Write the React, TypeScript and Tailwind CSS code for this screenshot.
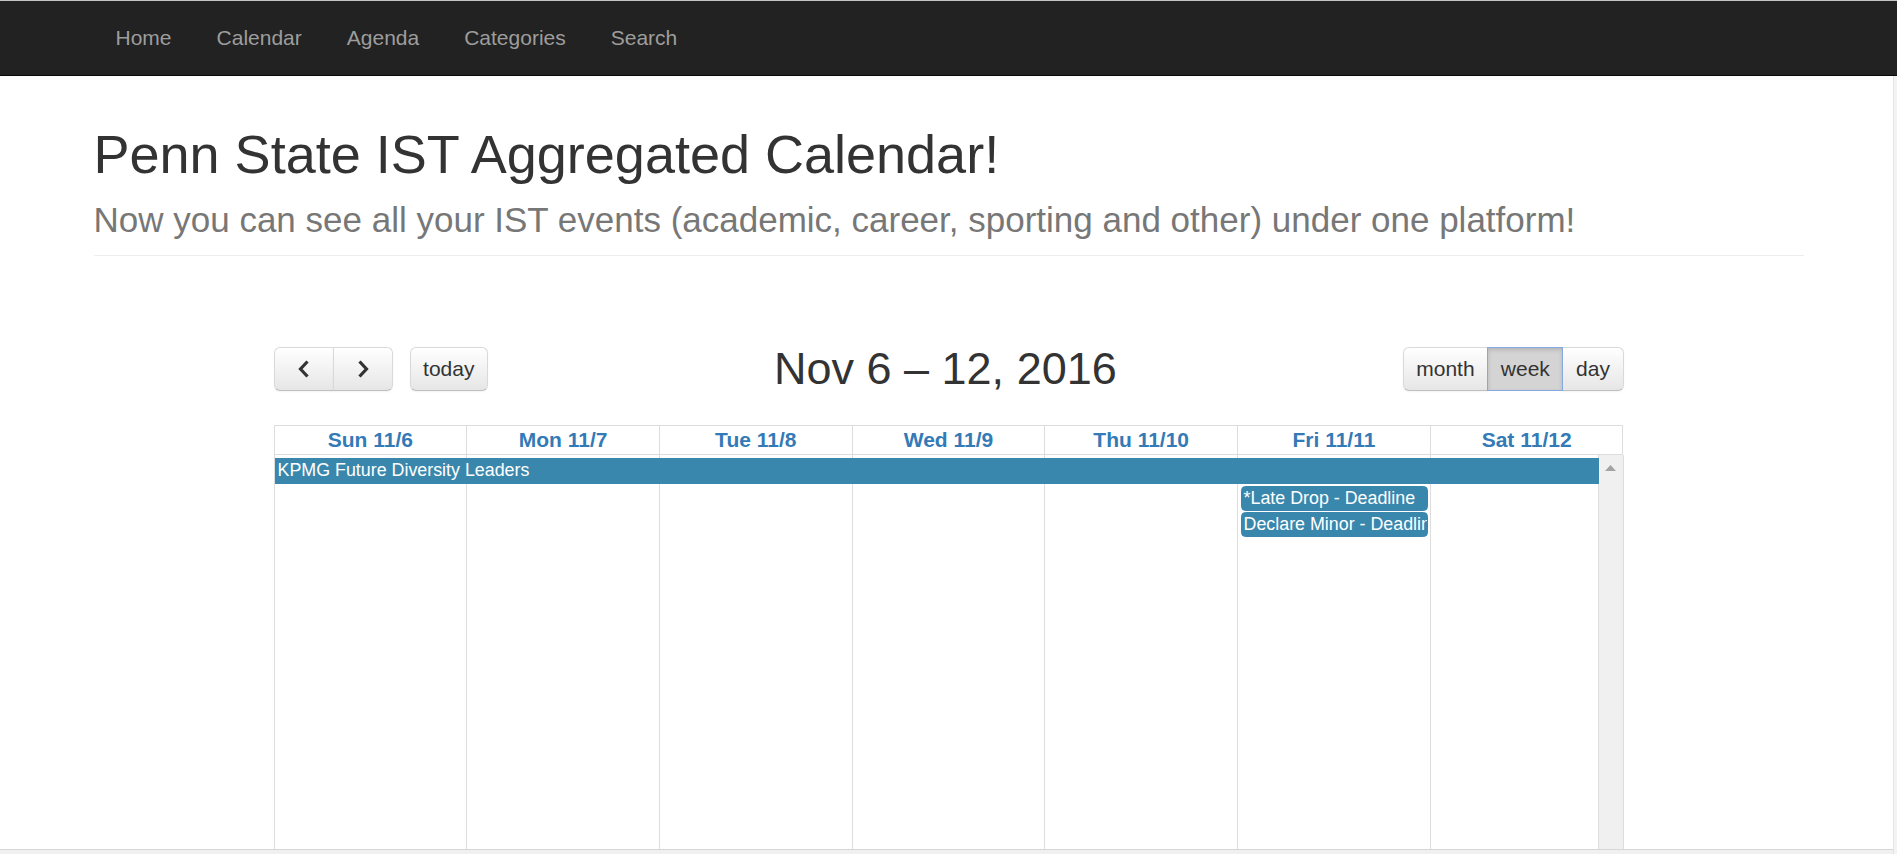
import React from 'react';

const navItems = ['Home', 'Calendar', 'Agenda', 'Categories', 'Search'];
const days = ['Sun 11/6', 'Mon 11/7', 'Tue 11/8', 'Wed 11/9', 'Thu 11/10', 'Fri 11/11', 'Sat 11/12'];
const colStart = ['col-start-1', 'col-start-2', 'col-start-3', 'col-start-4', 'col-start-5', 'col-start-6', 'col-start-7'];

function Chevron({ dir }: { dir: 'left' | 'right' }) {
  return (
    <svg width="14" height="20" viewBox="0 0 14 20" fill="none">
      <polyline
        points={dir === 'left' ? '10.5,2.5 3.5,10 10.5,17.5' : '3.5,2.5 10.5,10 3.5,17.5'}
        stroke="#333"
        strokeWidth="3.2"
        strokeLinecap="butt"
        strokeLinejoin="miter"
      />
    </svg>
  );
}

const btn =
  'h-[44px] flex items-center justify-center border border-[#d9d9d9] border-b-[#bfbfbf] bg-linear-to-b from-white to-[#e6e6e6] text-[21px] text-[#333] px-[12.6px] shadow-[inset_0_1px_0_rgba(255,255,255,0.2),0_1px_2px_rgba(0,0,0,0.05)]';

export default function App() {
  return (
    <div className="h-screen flex flex-col overflow-hidden bg-white font-['Liberation_Sans',Arial,sans-serif] text-[#333]">
      <nav className="h-[76px] shrink-0 bg-[#222] border-t border-[#c4c4c4] border-b border-b-[#080808]">
        <div className="w-[1755px] mx-auto px-[22px] h-full flex items-center">
          {navItems.map((item) => (
            <a key={item} className="px-[22.5px] text-[21px] text-[#9d9d9d] leading-[30px]">
              {item}
            </a>
          ))}
        </div>
      </nav>

      <main className="flex-1 min-h-0 flex flex-col">
        <div className="w-[1755px] mx-auto px-[22.5px] shrink-0">
          <div className="mt-[48px] pb-[15.5px] border-b border-[#eee]">
            <h1 className="text-[54px] leading-[60px] text-[#333]">Penn State IST Aggregated Calendar!</h1>
            <div className="mt-[15.5px] text-[35px] leading-[40px] text-[#777]">
              Now you can see all your IST events (academic, career, sporting and other) under one platform!
            </div>
          </div>
        </div>

        <div className="w-[1350px] mx-auto flex-1 min-h-0 flex flex-col">
          <div className="mt-[91px] h-[44px] flex items-center shrink-0">
            <div className="flex items-center gap-[17px]">
              <div className="flex">
                <button className={`${btn} w-[60px] rounded-l-[6px]`}>
                  <Chevron dir="left" />
                </button>
                <button className={`${btn} w-[60px] -ml-px rounded-r-[6px]`}>
                  <Chevron dir="right" />
                </button>
              </div>
              <button className={`${btn} rounded-[6px]`}>today</button>
            </div>
            <div className="flex-1 text-center text-[45px] leading-[50px] text-[#333]">Nov 6 – 12, 2016</div>
            <div className="flex">
              <button className={`${btn} rounded-l-[6px]`}>month</button>
              <button className="h-[44px] -ml-px px-[12.6px] flex items-center text-[21px] text-[#333] bg-[#d4d4d4] border border-[#86a8e0] shadow-[inset_0_2px_4px_rgba(0,0,0,0.15)] relative z-10">
                week
              </button>
              <button className={`${btn} -ml-px rounded-r-[6px]`}>day</button>
            </div>
          </div>

          <div className="mt-[34px] grid grid-cols-7 border-l border-[#ddd] shrink-0">
            {days.map((d) => (
              <div
                key={d}
                className="border-t border-r border-b border-[#ddd] text-center font-bold text-[21px] leading-[28px] text-[#337ab7]"
              >
                {d}
              </div>
            ))}
          </div>

          <div className="flex-1 min-h-0 flex border-l border-[#ddd]">
            <div className="flex-1 grid grid-cols-[repeat(6,192.714px)_minmax(0,1fr)] grid-rows-[auto_auto_auto_1fr]">
              {days.map((d, i) => (
                <div key={d} className={`${colStart[i]} row-start-1 row-end-5 border-r border-[#ddd]`} />
              ))}
              <div className="col-start-1 col-end-8 row-start-1 mt-[3px] h-[26px] bg-[#3a87ad] border-y border-[#3a87ad] px-[3px] text-[17.85px] leading-[23px] text-white whitespace-nowrap overflow-hidden">
                KPMG Future Diversity Leaders
              </div>
              <div className="col-start-6 row-start-2 mt-[1.5px] mx-[3px] h-[25px] bg-[#3a87ad] border border-[#3a87ad] rounded-[4.5px] px-[1.5px] text-[17.85px] leading-[22px] text-white whitespace-nowrap overflow-hidden">
                *Late Drop - Deadline
              </div>
              <div className="col-start-6 row-start-3 mt-[1.5px] mx-[3px] h-[25px] bg-[#3a87ad] border border-[#3a87ad] rounded-[4.5px] px-[1.5px] text-[17.85px] leading-[22px] text-white whitespace-nowrap overflow-hidden">
                Declare Minor - Deadline
              </div>
            </div>
            <div className="w-[25px] shrink-0 bg-[#f0f0f0] border-r border-[#ddd] flex justify-center">
              <svg className="mt-[10px]" width="11" height="6" viewBox="0 0 11 6">
                <polygon points="5.5,0 11,6 0,6" fill="#a3a3a3" />
              </svg>
            </div>
          </div>
        </div>
      </main>

      <div className="fixed left-0 right-0 bottom-0 h-[5px] bg-[#f0f0f0] border-t border-[#d6d6d6]" />
      <div className="fixed right-0 top-[76px] bottom-0 w-[4px] bg-[#f3f3f3] border-l border-[#e4e4e4]" />
    </div>
  );
}
